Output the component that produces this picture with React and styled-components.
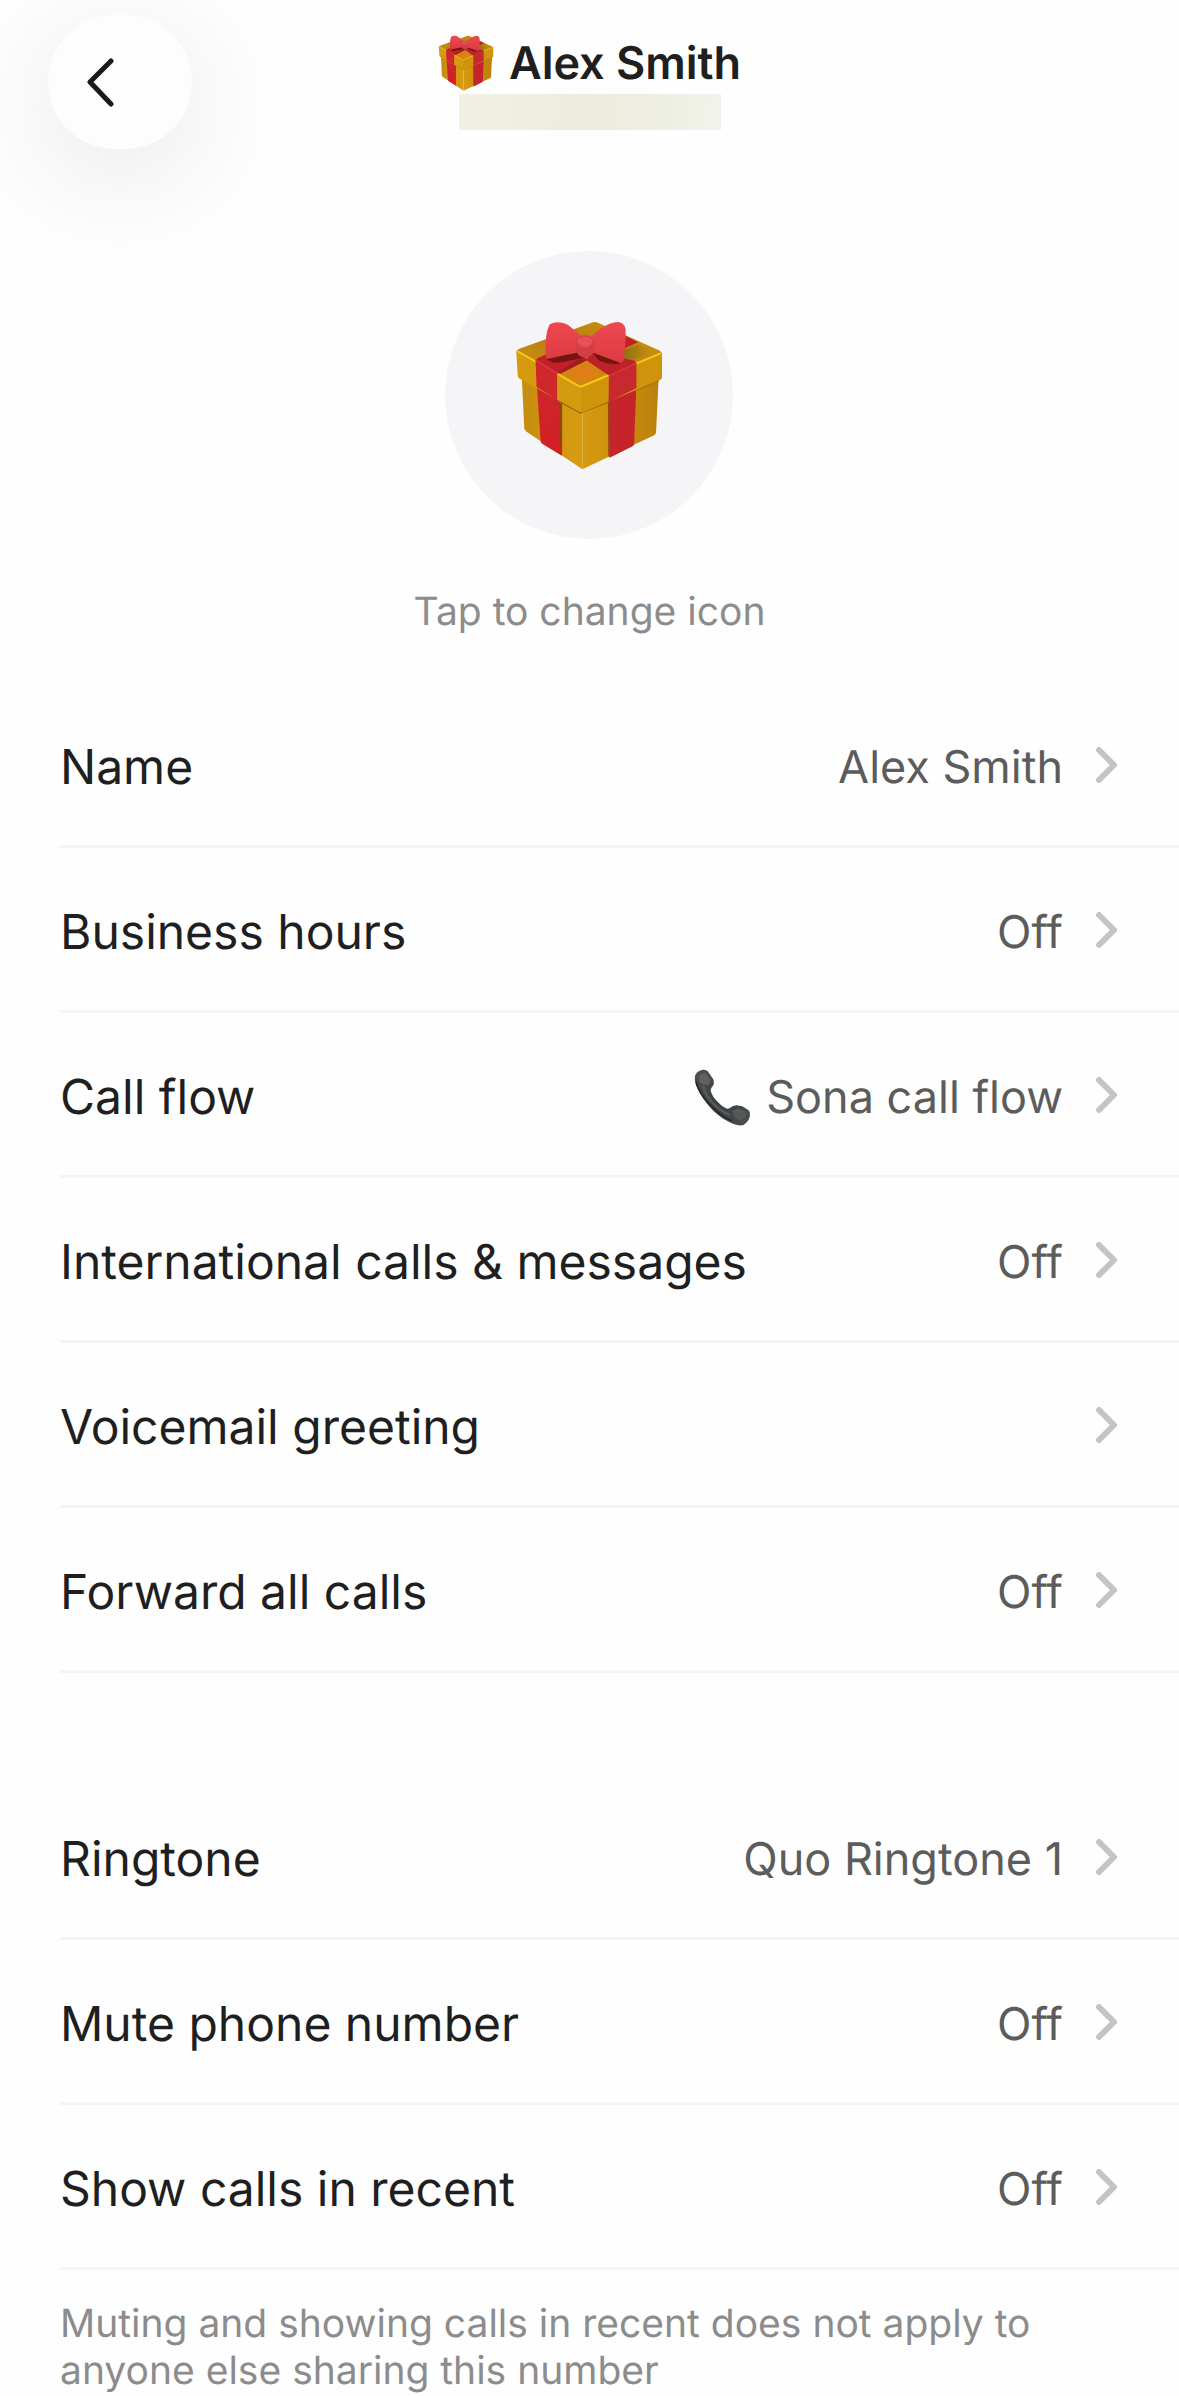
import React, { useState } from 'react';
import styled, { createGlobalStyle } from 'styled-components';

const GlobalStyle = createGlobalStyle`
  * {
    box-sizing: border-box;
  }

  body {
    margin: 0;
    background-color: #fefefe;
    color: #1f1f1f;
    font-family: Inter, 'Liberation Sans', sans-serif;
    text-rendering: geometricPrecision;
  }

  button {
    border: 0;
    padding: 0;
    background: none;
    color: inherit;
    font: inherit;
    text-rendering: inherit;
    cursor: pointer;
  }

  svg {
    display: block;
    flex-shrink: 0;
  }
`;

const Page = styled.div`
  overflow: hidden;
`;

const Header = styled.header`
  display: grid;
  grid-template-columns: 1fr auto 1fr;
  align-items: center;
  padding: 15px 48px 0;
`;

const BackButton = styled.button`
  display: flex;
  align-items: center;
  width: 144px;
  height: 134px;
  padding-left: 38px;
  border-radius: 67px;
  background-color: #fdfdfd;
  box-shadow: 0 24px 120px rgba(0, 0, 0, 0.1);
`;

const Heading = styled.div`
  display: flex;
  flex-direction: column;
  align-items: center;
  gap: 3px;
`;

const Title = styled.h1`
  display: flex;
  align-items: center;
  gap: 15px;
  margin: 0;
  font-size: 45px;
  font-weight: 600;
  line-height: 56px;
`;

const HiddenNumber = styled.div`
  width: 262px;
  height: 36px;
  background: linear-gradient(100deg, #f2f0e4 0%, #ecedde 45%, #edeee1 75%, #f3f3ec 100%);
`;

const IconPicker = styled.button`
  display: flex;
  flex-direction: column;
  align-items: center;
  gap: 49px;
  margin: 102px auto 48px;
  color: #8c8c8c;
  font-size: 39px;
  line-height: 47px;
`;

const Avatar = styled.span`
  display: flex;
  align-items: center;
  justify-content: center;
  width: 288px;
  height: 288px;
  border-radius: 50%;
  background-color: #f5f5f8;
`;

const List = styled.ul`
  margin: 0;
  padding: 0 0 0 60px;
  list-style: none;

  & + & {
    margin-top: 102px;
  }
`;

const Item = styled.li`
  border-bottom: 3px solid #f4f4f4;
`;

const Row = styled.button`
  display: flex;
  align-items: center;
  gap: 32px;
  width: 100%;
  height: 162px;
  padding: 6px 60px 0 0;
  text-align: left;
`;

const Label = styled.span`
  flex: 1;
  font-size: 48px;
  line-height: 60px;
`;

const Value = styled.span`
  display: flex;
  align-items: center;
  gap: 15px;
  color: #5c5c5c;
  font-size: 45px;
  line-height: 60px;
`;

const Note = styled.p`
  margin: 0;
  padding: 30px 120px 0 60px;
  color: #8c8c8c;
  font-size: 39px;
  line-height: 47px;
`;

const GiftIcon = ({ size }) => (
  <svg width={size} height={size} viewBox="75 60 446 452" aria-hidden="true">
    <defs>
      <linearGradient id="giftLeft" x1="0" x2="1">
        <stop offset="0" stopColor="#c58c10" />
        <stop offset="1" stopColor="#d99c12" />
      </linearGradient>
      <linearGradient id="giftRight" x1="0" x2="1">
        <stop offset="0" stopColor="#d79b0f" />
        <stop offset="1" stopColor="#bb800b" />
      </linearGradient>
      <linearGradient id="giftTop" x1="0" y1="1" x2="1" y2="0">
        <stop offset="0" stopColor="#d9a010" />
        <stop offset="0.5" stopColor="#b87d12" />
        <stop offset="1" stopColor="#cf980e" />
      </linearGradient>
      <linearGradient id="giftRibbon" x1="0" y1="0" x2="0" y2="1">
        <stop offset="0" stopColor="#c92a2c" />
        <stop offset="1" stopColor="#d61c25" />
      </linearGradient>
      <linearGradient id="giftBow" x1="0" y1="0" x2="0" y2="1">
        <stop offset="0" stopColor="#ee4850" />
        <stop offset="1" stopColor="#dc3b43" />
      </linearGradient>
      <radialGradient id="giftGlow">
        <stop offset="0" stopColor="#e87a18" />
        <stop offset="1" stopColor="#c98a10" />
      </radialGradient>
      <linearGradient id="giftShade" x1="0" y1="0" x2="1" y2="0">
        <stop offset="0" stopColor="#8a7010" />
        <stop offset="1" stopColor="#c08a10" />
      </linearGradient>
    </defs>
    <path d="M95 222 278 330V510L109 396Q104 392 103 386Z" fill="url(#giftLeft)" />
    <path d="M278 330 508 232 500 398Q500 404 494 407L278 510Z" fill="url(#giftRight)" />
    <path d="M140 240 212 285 215 468 158 434Q153 430 152 422Z" fill="url(#giftRibbon)" />
    <path d="M207 300 217 302V466L213 468Z" fill="#8a4a0b" />
    <path d="M357 290 441 250 434 432Q434 438 428 441L360 475Z" fill="#c7232a" />
    <path d="M355 300 360 298V474L356 470Z" fill="#8e4b0b" />
    <path d="M94 231 137 256M203 302 272 340 357 307M442 270 508 242" fill="none" stroke="#9c680a" strokeWidth="5" />
    <path d="M79 160Q79 150 88 147L306 68Q315 64 325 68L510 152Q518 156 518 164L440 215 272 275Z" fill="url(#giftTop)" />
    <path d="M204 221 290 178 358 228 274 262Z" fill="url(#giftGlow)" />
    <path d="M398 152 445 134 475 148 466 166 430 180 398 176Z" fill="url(#giftShade)" />
    <path d="M79 155 272 264 278 338Q272 338 264 334L88 236Q83 233 83 226Z" fill="#d49a10" />
    <path d="M272 264 518 159V232Q518 238 512 241L286 336Q280 339 274 338Z" fill="#d0930c" />
    <path d="M82 154 265 258Q272 262 279 259L515 160" fill="none" stroke="#f3cb14" strokeWidth="6" strokeLinejoin="round" />
    <path d="M400 104 446 127 404 146Z" fill="#c4202a" />
    <path d="M137 183Q138 178 146 174L176 160 262 160 292 178 205 222Z" fill="#c4202a" />
    <path d="M206 216 270 176 298 178 212 222Z" fill="#a31c20" />
    <path d="M288 180 310 158 435 182 441 192 360 229Z" fill="#bd2229" />
    <path d="M137 182 202 222V300L140 262Z" fill="#cf272c" />
    <path d="M358 228 441 190V265L357 307Z" fill="#c7292e" />
    <path d="M138 181 202 221M359 228 440 190" stroke="#d63a40" strokeWidth="4" />
    <path d="M170 178 262 156 288 172 214 188Q190 192 170 178Z" fill="#74150f" />
    <path d="M308 158 396 190Q366 198 328 182Z" fill="#74150f" />
    <path d="M180 73C195 62 222 66 236 76L273 106Q285 128 268 157L173 177Q167 177 168 168C166 130 168 92 180 73Z" fill="url(#giftBow)" />
    <path d="M308 106C330 88 352 68 386 66Q404 68 408 86C410 120 406 155 401 184Q398 191 390 188L310 158Z" fill="url(#giftBow)" />
    <path d="M257 134C257 112 266 107 286 107S314 114 314 136 306 173 286 173 257 158 257 134Z" fill="#d43e46" />
    <path d="M262 122Q268 110 286 110 304 110 310 122 306 142 286 142 266 142 262 122Z" fill="#ea4e56" />
  </svg>
);

const PhoneIcon = () => (
  <svg width="57" height="57" viewBox="54 59 170 170" aria-hidden="true">
    <defs>
      <linearGradient id="phoneBody" x1="0" y1="0" x2="1" y2="1">
        <stop offset="0" stopColor="#505254" />
        <stop offset="0.5" stopColor="#3b3f40" />
        <stop offset="1" stopColor="#4b4d4f" />
      </linearGradient>
    </defs>
    <path
      d="M57 80C60 68 72 61 84 61Q91 61 95 66L111 89Q114 95 113 102C112 111 103 114 104 124 108 144 132 168 151 177 162 179 168 167 181 167L198 170 217 182Q222 187 221 196C219 212 208 224 198 227 180 229 155 218 132 201 102 177 76 145 60 108Q54 92 57 80Z"
      fill="url(#phoneBody)"
    />
    <path d="M68 82Q76 72 86 70L104 92 98 106 84 106 70 98Z" fill="#5f6163" />
    <path d="M168 184 186 176 208 186 210 194Q206 207 193 213L176 204Z" fill="#565859" />
    <path d="M82 112C88 142 120 178 158 195" fill="none" stroke="#585b5d" strokeWidth="7" strokeLinecap="round" />
    <path d="M61 98C70 138 115 190 165 213" fill="none" stroke="#252829" strokeWidth="5" strokeLinecap="round" />
  </svg>
);

const BackIcon = () => (
  <svg width="30" height="50" viewBox="0 0 30 50" fill="none" aria-hidden="true">
    <path d="M25 4 4 25 25 47" stroke="#1a1a1a" strokeWidth="5" strokeLinecap="round" strokeLinejoin="round" />
  </svg>
);

const Chevron = () => (
  <svg width="24" height="40" viewBox="0 0 24 40" fill="none" aria-hidden="true">
    <path d="M4 3 19 18 4 33" stroke="#c4c4c4" strokeWidth="6" strokeLinecap="round" strokeLinejoin="round" />
  </svg>
);

const callSettings = [
  { label: 'Name', value: 'Alex Smith' },
  { label: 'Business hours', value: 'Off' },
  { label: 'Call flow', value: 'Sona call flow', icon: <PhoneIcon /> },
  { label: 'International calls & messages', value: 'Off' },
  { label: 'Voicemail greeting' },
  { label: 'Forward all calls', value: 'Off' },
];

const soundSettings = [
  { label: 'Ringtone', value: 'Quo Ringtone 1' },
  { label: 'Mute phone number', value: 'Off' },
  { label: 'Show calls in recent', value: 'Off' },
];

const SettingsList = ({ items, onSelect }) => (
  <List>
    {items.map((item) => (
      <Item key={item.label}>
        <Row type="button" onClick={() => onSelect(item.label)}>
          <Label>{item.label}</Label>
          {item.value && (
            <Value>
              {item.icon}
              {item.value}
            </Value>
          )}
          <Chevron />
        </Row>
      </Item>
    ))}
  </List>
);

export default function App() {
  const [, setSelected] = useState(null);

  return (
    <Page>
      <GlobalStyle />
      <Header>
        <BackButton type="button" aria-label="Back">
          <BackIcon />
        </BackButton>
        <Heading>
          <Title>
            <GiftIcon size={56} />
            Alex Smith
          </Title>
          <HiddenNumber />
        </Heading>
      </Header>
      <main>
        <IconPicker type="button">
          <Avatar>
            <GiftIcon size={150} />
          </Avatar>
          Tap to change icon
        </IconPicker>
        <SettingsList items={callSettings} onSelect={setSelected} />
        <SettingsList items={soundSettings} onSelect={setSelected} />
        <Note>Muting and showing calls in recent does not apply to anyone else sharing this number</Note>
      </main>
    </Page>
  );
}
